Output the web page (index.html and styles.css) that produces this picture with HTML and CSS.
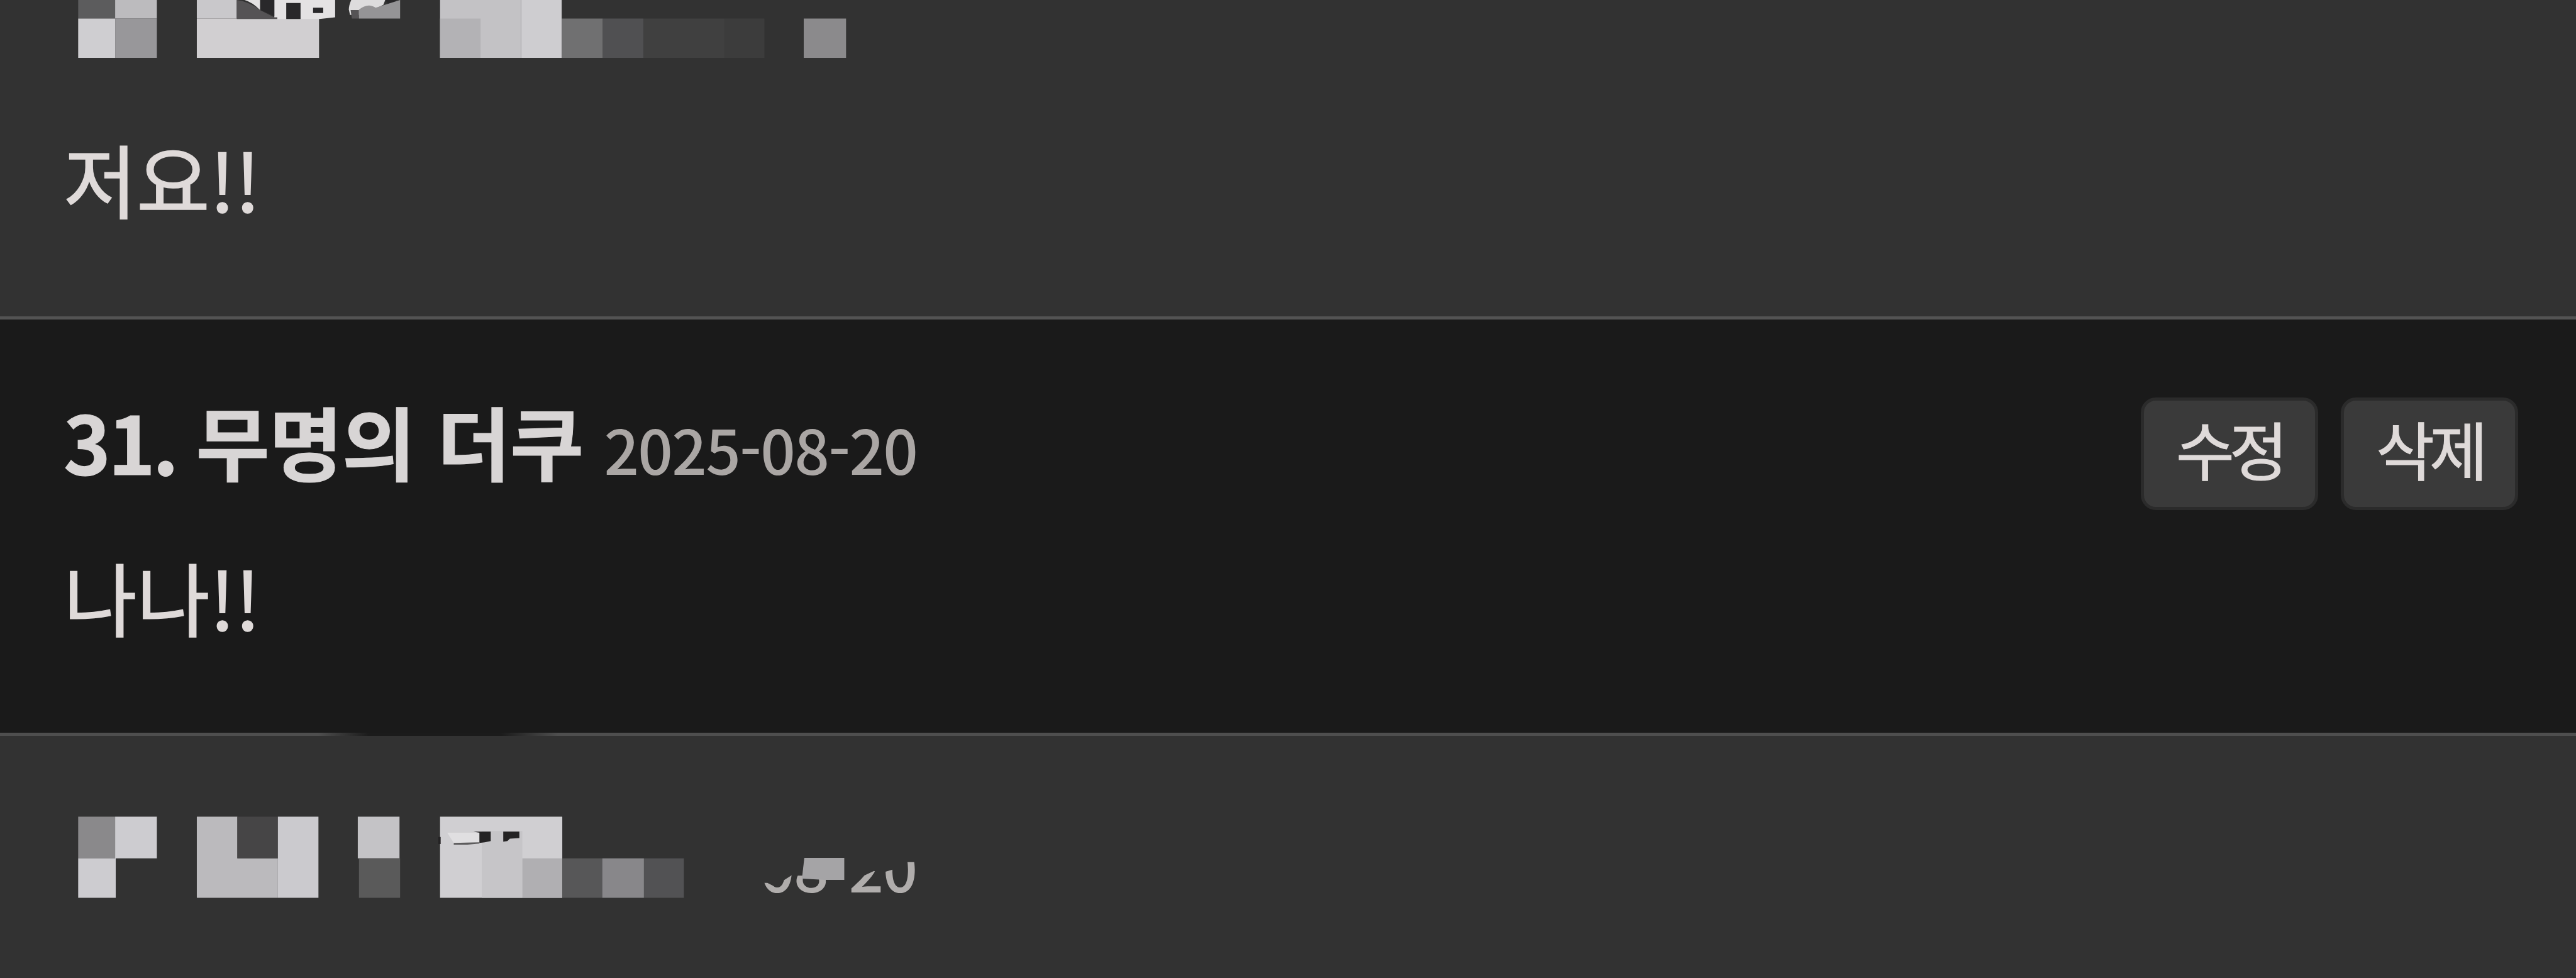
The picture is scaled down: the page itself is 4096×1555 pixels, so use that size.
FILE: index.html
```
<!DOCTYPE html>
<html lang="ko">
<head>
<meta charset="utf-8">
<title>댓글</title>
<link rel="stylesheet" href="styles.css">
</head>
<body>
<main class="comments">
  <article class="comment comment-first">
    <svg class="mosaic mosaic-top" viewBox="0 0 1600 100" aria-hidden="true">
      <path fill="#5c5c5d" d="M131 0h62v31h-62z"/>
      <path fill="#bcbbbe" d="M193 0h70v31h-70z"/>
      <path fill="#cfced1" d="M131 31h62v66h-62z"/>
      <path fill="#98979a" d="M193 31h70v66h-70z"/>
      <path fill="#c9c8cb" d="M330 0h67v31h-67z"/>
      <path fill="#d1cfd1" d="M330 31h205v66H330z"/>
      <path fill="#e4e2e3" d="M410 0h26v17q-12-13-26-17zM460 0h102v29l-27 3h-75z"/>
      <path fill="#555355" d="M397 0q22 3 39 17l24 12h5v3h-68z"/>
      <path fill="#29282a" d="M437 0h23v27l-23-10zM480 5h24v27h-24zM525 13h17v9h-17z"/>
      <path fill="#dddcdd" d="M589 0h57l-3 8-33 17h-23l-2-9q0-7 4-16z"/>
      <path fill="#555355" d="M588 17h14v14h-12z"/>
      <path fill="#29282a" d="M646 0h18v5l-12 2z"/>
      <path fill="#959496" d="M602 16q15-12 28-3l41-13v31h-69z"/>
      <path fill="#c3c2c5" d="M738 0h136v97H738z"/>
      <path fill="#b3b2b5" d="M738 31h68v66h-68z"/>
      <path fill="#cecdd0" d="M874 0h68v97h-68z"/>
      <path fill="#707071" d="M942 31h69v66h-69z"/>
      <path fill="#505052" d="M1011 31h68v66h-68z"/>
      <path fill="#404040" d="M1079 31h136v66h-136z"/>
      <path fill="#3c3c3c" d="M1215 31h67v66h-67z"/>
      <path fill="#8b8a8c" d="M1348 31h71v66h-71z"/>
    </svg>
    <p class="body">저요!!</p>
  </article>
  <article class="comment comment-mine">
    <header class="meta">
      <h2 class="author"><span class="number">31. </span>무명의 더쿠</h2>
      <time class="date">2025-08-20</time>
      <div class="actions">
        <button class="action" type="button">수정</button>
        <button class="action" type="button">삭제</button>
      </div>
    </header>
    <p class="body">나나!!</p>
  </article>
  <article class="comment comment-last">
    <svg class="mosaic mosaic-bottom" viewBox="0 0 1600 200" aria-hidden="true">
      <defs>
        <clipPath id="date-rest"><path d="M1270 140l17 0 12 6 15-10 14-9 5 20 3-19h60l10 20 60-28 10 6 10-5 17-5 14-11h40v80h-287z"/></clipPath>
      </defs>
      <path fill="#8a898b" d="M131 29h62v70h-62z"/>
      <path fill="#cdccd0" d="M193 29h70v70h-70zM131 99h63v66h-63z"/>
      <path fill="#bbbabd" d="M330 29h68v70h68v66H330z"/>
      <path fill="#464546" d="M398 29h68v70h-68z"/>
      <path fill="#cbcace" d="M466 29h68v136h-68z"/>
      <path fill="#c4c3c6" d="M600 29h70v70h-70z"/>
      <path fill="#5a5a5a" d="M602 99h69v66h-69z"/>
      <path fill="#d0cfd2" d="M738 29h205v136H738z"/>
      <path fill="#c6c5c8" d="M808 53h68v112h-68z"/>
      <path fill="#b0afb2" d="M876 99h67v66h-67z"/>
      <path fill="#e0dfe1" d="M750 56h54v16l-43 1z"/>
      <path fill="#242324" d="M794 54h29v16l-10 2-9 1V56zM844 54h27v11l-16 1-4 4-7 1zM735 63h4v12h-4z"/>
      <path fill="#5d5c5d" d="M761 73l43-1v2l-20 2h-23z"/>
      <path fill="#575758" d="M943 99h67v66h-67z"/>
      <path fill="#88878a" d="M1010 99h70v66h-70z"/>
      <path fill="#525254" d="M1080 99h67v66h-67z"/>
      <text class="date-text" x="1011" y="156" clip-path="url(#date-rest)">2025-08-20</text>
      <path fill="#a5a4a6" d="M1349 98h67v37h-32l-39-2z"/>
    </svg>
  </article>
</main>
</body>
</html>
```
FILE: styles.css
```
* { box-sizing: border-box; }

body {
  margin: 0;
  background: #323232;
  color: #dfdad9;
  font-family: "Noto Sans CJK KR", sans-serif;
}

.comments {
  display: flex;
  flex-direction: column;
  height: 1555px;
  overflow: hidden;
}

.comment { padding: 0 92px 0 101px; }

.comment-first {
  height: 508px;
  border-bottom: 5px solid #535353;
}

.comment-mine {
  height: 657px;
  padding-top: 124px;
  background: #1a1a1a;
}

.comment-last {
  flex: 1;
  border-top: 5px solid;
  border-image: linear-gradient(90deg, #4e4e4e 510px, #1b1b1b 590px, #1b1b1b 800px, #4e4e4e 890px) 5;
}

.mosaic {
  display: block;
  width: 1517px;
  margin-left: -101px;
}

.mosaic-top { height: 94.8px; }
.mosaic-bottom { height: 189.6px; margin-top: 101px; }

.body {
  margin: 0;
  font-size: 127px;
  line-height: 180px;
  letter-spacing: -0.8px;
  -webkit-text-stroke: 1.6px currentColor;
}

.comment-first .body { margin-top: 98px; }
.comment-mine .body { margin-top: 47px; }

.meta {
  display: flex;
  align-items: baseline;
  height: 179px;
}

.author {
  margin: 0;
  font-size: 127px;
  line-height: 136px;
  letter-spacing: -0.7px;
  color: #d8d5d5;
  white-space: pre;
  -webkit-text-stroke: 1.2px currentColor;
}

.number { letter-spacing: -4px; }

.date {
  margin-left: 33px;
  font-size: 97.6px;
  font-weight: 500;
  letter-spacing: -1.7px;
  color: #aaa6a4;
}

.date-text {
  font-size: 103px;
  font-weight: 500;
  letter-spacing: -1.7px;
  fill: #b0adac;
}

.actions {
  display: flex;
  gap: 36px;
  align-self: flex-start;
  margin-left: auto;
}

.action {
  width: 282px;
  height: 179px;
  padding: 0 0 18px;
  border: 5px solid #2b2b2b;
  border-radius: 24px;
  background: #3a3a3a;
  color: inherit;
  font: 101px/1 "Noto Sans CJK KR", sans-serif;
  letter-spacing: -8px;
  -webkit-text-stroke: 1.2px currentColor;
}
```
